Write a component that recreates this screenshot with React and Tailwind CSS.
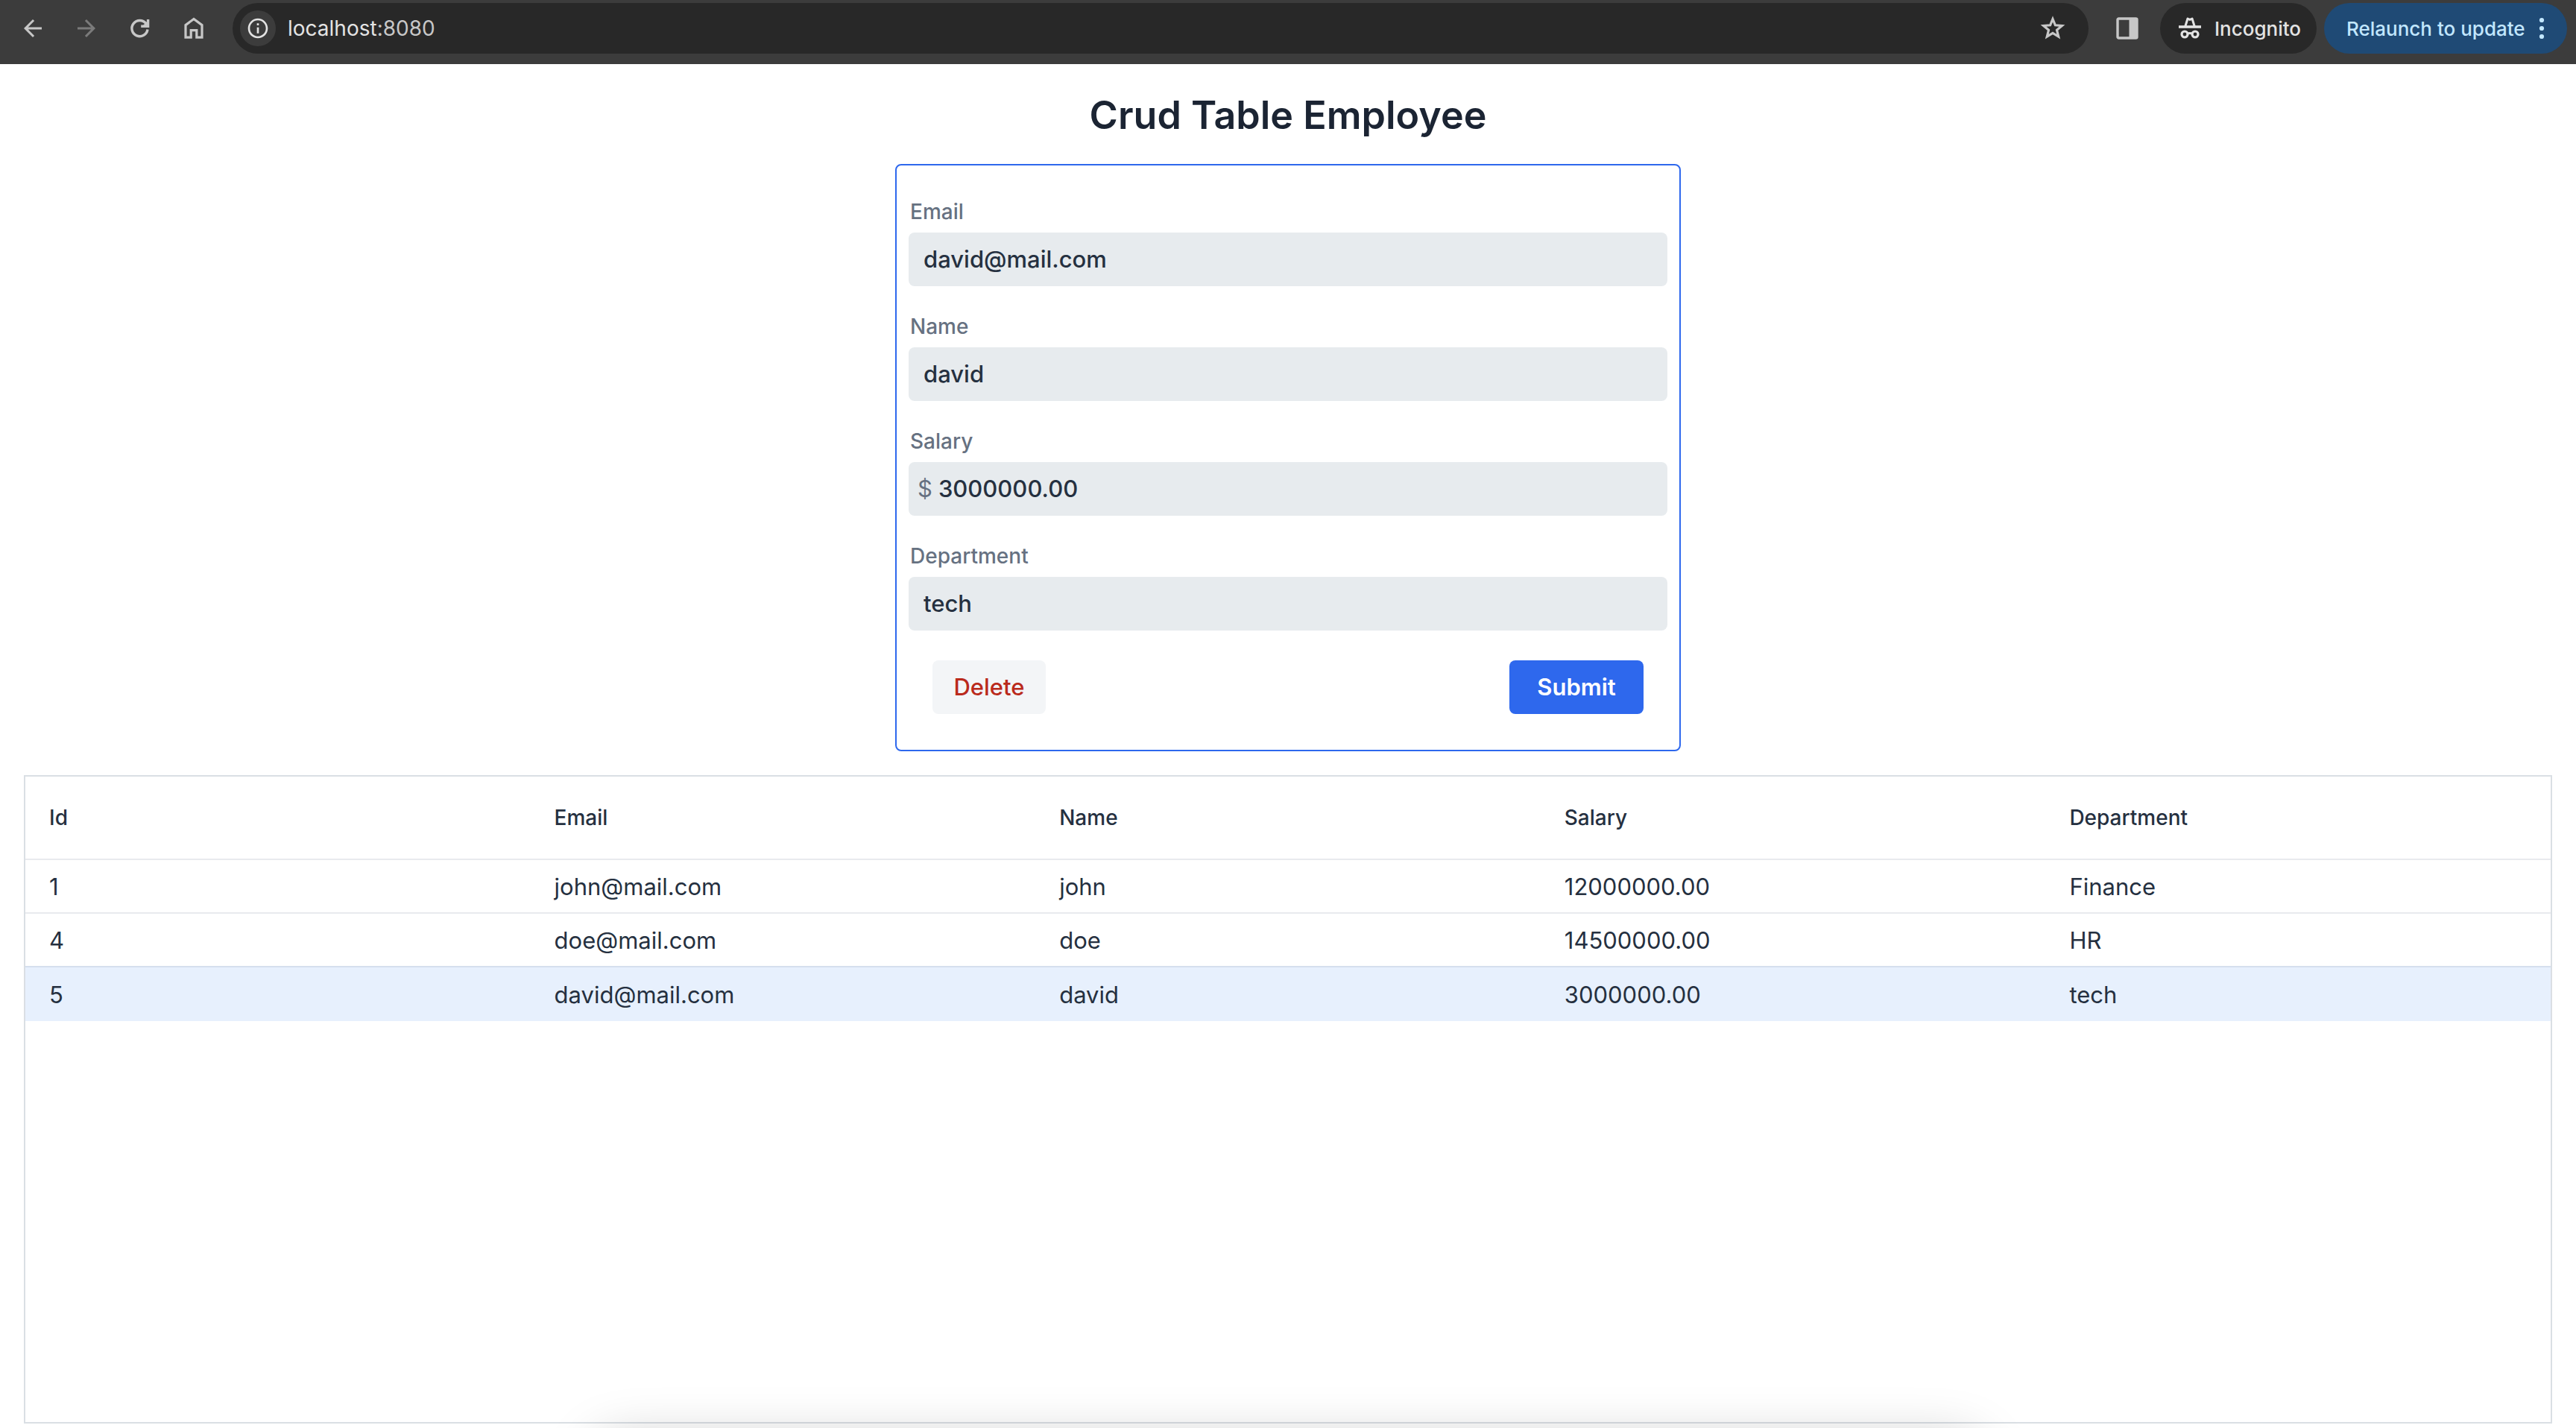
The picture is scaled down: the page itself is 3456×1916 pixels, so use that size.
import React, { useState } from "react";
import { MdArrowBack, MdArrowForward, MdInfoOutline } from "react-icons/md";

const employees = [
  { id: 1, email: "john@mail.com", name: "john", salary: "12000000.00", department: "Finance" },
  { id: 4, email: "doe@mail.com", name: "doe", salary: "14500000.00", department: "HR" },
  { id: 5, email: "david@mail.com", name: "david", salary: "3000000.00", department: "tech" },
];

const columns = [
  ["id", "Id"],
  ["email", "Email"],
  ["name", "Name"],
  ["salary", "Salary"],
  ["department", "Department"],
];

function ReloadIcon() {
  return (
    <svg viewBox="0 0 36 36" className="size-9" fill="none" stroke="currentColor" strokeWidth="3.4" aria-hidden="true">
      <path d="M28 19.5A10.6 10.6 0 1 1 26 11.8" />
      <path d="M28.6 6V15.3H19.2" />
      <path d="M27 9V14H22Z" fill="currentColor" stroke="none" />
    </svg>
  );
}

function HomeIcon() {
  return (
    <svg viewBox="0 0 36 36" className="size-9" fill="none" stroke="currentColor" strokeWidth="3.2" aria-hidden="true">
      <path d="M7 30.2V13.6L18 5.4L29 13.6V30.2H21.8V20.6H14.2V30.2Z" />
    </svg>
  );
}

function StarIcon() {
  return (
    <svg viewBox="0 0 40 40" className="size-10" fill="none" stroke="currentColor" strokeWidth="3.2" aria-hidden="true">
      <path d="M20 7.5L23.4 15.8L32.4 16.5L25.5 22.3L27.7 31L20 26.3L12.3 31L14.5 22.3L7.6 16.5L16.6 15.8Z" />
    </svg>
  );
}

function SidePanelIcon() {
  return (
    <svg viewBox="0 0 30 30" className="size-[30px]" fill="none" aria-hidden="true">
      <rect x="2" y="2" width="26" height="26" rx="1.5" stroke="currentColor" strokeWidth="3.4" />
      <rect x="17.5" y="1" width="11" height="28" fill="currentColor" />
    </svg>
  );
}

function IncognitoIcon() {
  return (
    <svg viewBox="0 0 30 30" className="size-[30px]" fill="none" stroke="currentColor" aria-hidden="true">
      <path d="M8.6 13L12 2L15 3.4L18 2L21.4 13" strokeWidth="3" strokeLinejoin="round" />
      <path d="M0 13H30" strokeWidth="3.6" />
      <circle cx="8" cy="23" r="4" strokeWidth="3.2" />
      <circle cx="22" cy="23" r="4" strokeWidth="3.2" />
      <path d="M11.5 22.4Q15 20.6 18.5 22.4" strokeWidth="3" />
    </svg>
  );
}

function DotsIcon() {
  return (
    <svg viewBox="0 0 8 30" className="h-[30px] w-2" fill="currentColor" aria-hidden="true">
      <circle cx="4" cy="4" r="3.1" />
      <circle cx="4" cy="15" r="3.1" />
      <circle cx="4" cy="26" r="3.1" />
    </svg>
  );
}

function BrowserBar() {
  return (
    <header className="flex h-[86px] items-start bg-[#3c3c3c] pt-1 pr-3 pl-6 text-[#c7c7c7]">
      <nav className="flex h-[68px] items-center gap-8">
        <button type="button" aria-label="Back" className="flex size-10 items-center justify-center"><MdArrowBack className="size-9" /></button>
        <button type="button" aria-label="Forward" className="flex size-10 items-center justify-center text-[#7b7b7b]"><MdArrowForward className="size-9" /></button>
        <button type="button" aria-label="Reload" className="flex size-10 items-center justify-center"><ReloadIcon /></button>
        <button type="button" aria-label="Home" className="flex size-10 items-center justify-center"><HomeIcon /></button>
      </nav>
      <div className="ml-8 flex h-[68px] flex-1 items-center rounded-full bg-[#282828] pr-7 pl-[10px]">
        <button type="button" aria-label="Site information" className="flex size-12 items-center justify-center rounded-full bg-[#3c3c3c] text-[#e3e3e3]"><MdInfoOutline className="size-8" /></button>
        <p className="ml-4 flex-1 text-[28px] text-[#c7c7c7]"><span className="text-[#e3e3e3]">localhost</span>:8080</p>
        <button type="button" aria-label="Bookmark this page"><StarIcon /></button>
      </div>
      <button type="button" aria-label="Side panel" className="mr-[29px] ml-[37px] flex h-[68px] items-center"><SidePanelIcon /></button>
      <div className="flex h-[68px] w-[210px] items-center gap-[18px] rounded-full bg-[#282828] pl-[25px] text-[26px] font-medium text-[#e3e3e3]">
        <IncognitoIcon />
        Incognito
      </div>
      <button type="button" className="ml-[10px] flex h-[68px] w-[326px] items-center justify-between rounded-full bg-[#1f4a75] px-[30px] text-[26px] font-medium text-[#c2e7ff]">
        Relaunch to update
        <DotsIcon />
      </button>
    </header>
  );
}

function Field({ label, name, value, prefix, onChange }) {
  return (
    <div className="flex flex-col">
      <label htmlFor={name} className="mb-2 px-[2px] text-[28px] leading-10 font-medium text-[#667181]">{label}</label>
      <div className="flex h-[72px] items-center rounded-lg bg-[#e7ebee] px-3 text-[31px] font-medium text-[#253040]">
        {prefix && <span className="mr-2 font-normal text-[#667181]">{prefix}</span>}
        <input
          id={name}
          value={value}
          onChange={(e) => onChange(name, e.target.value)}
          className={prefix ? "min-w-0 flex-1 bg-transparent outline-none" : "min-w-0 flex-1 bg-transparent pl-2 outline-none"}
        />
      </div>
    </div>
  );
}

export default function App() {
  const [selected, setSelected] = useState(5);
  const [form, setForm] = useState(employees[2]);
  const update = (key, value) => setForm({ ...form, [key]: value });

  return (
    <div className="relative flex min-h-screen flex-col overflow-hidden bg-white font-['Inter',sans-serif]">
      <BrowserBar />
      <main className="flex flex-1 flex-col px-8 pb-[6px]">
        <h1 className="mt-[34px] text-center text-[52px] leading-[70px] font-semibold text-[#1b2433]">Crud Table Employee</h1>
        <form onSubmit={(e) => e.preventDefault()} className="mx-auto mt-[30px] w-[1054px] max-w-full rounded-lg border-2 border-[#2e68ed] px-4 pt-[42px] pb-12">
          <div className="flex flex-col gap-[34px]">
            <Field label="Email" name="email" value={form.email} onChange={update} />
            <Field label="Name" name="name" value={form.name} onChange={update} />
            <Field label="Salary" name="salary" value={form.salary} prefix="$" onChange={update} />
            <Field label="Department" name="department" value={form.department} onChange={update} />
          </div>
          <div className="mt-10 flex justify-between px-8">
            <button type="button" className="h-[72px] w-[152px] rounded-lg bg-[#f3f5f7] text-[31px] font-medium text-[#ba2a1c]">Delete</button>
            <button type="submit" className="h-[72px] w-[180px] rounded-lg bg-[#2e68ed] text-[31px] font-semibold text-white">Submit</button>
          </div>
        </form>
        <div className="mt-8 flex-1 border-2 border-[#dadfe4]">
          <table className="w-full table-fixed border-separate border-spacing-0 text-left text-[#253040]">
            <thead>
              <tr className="text-[28px]">
                {columns.map(([key, title]) => <th key={key} scope="col" className="h-[110px] px-8 py-0 font-medium">{title}</th>)}
              </tr>
            </thead>
            <tbody className="text-[31px]">
              {employees.map((row) => (
                <tr
                  key={row.id}
                  onClick={() => { setSelected(row.id); setForm(row); }}
                  className={row.id === selected ? "group border-[#d5dfee] bg-[#e7f0fd]" : "group border-[#e8eaee]"}
                >
                  {columns.map(([key]) => <td key={key} className="h-[72px] border-t-2 border-inherit px-8 pt-[2px] pb-0 group-last:h-[74px]">{row[key]}</td>)}
                </tr>
              ))}
            </tbody>
          </table>
        </div>
      </main>
      <div className="pointer-events-none absolute -bottom-24 left-[23%] h-20 w-[54%] rounded-[40px] shadow-[0_0_70px_rgba(0,0,0,0.22)]" />
    </div>
  );
}
